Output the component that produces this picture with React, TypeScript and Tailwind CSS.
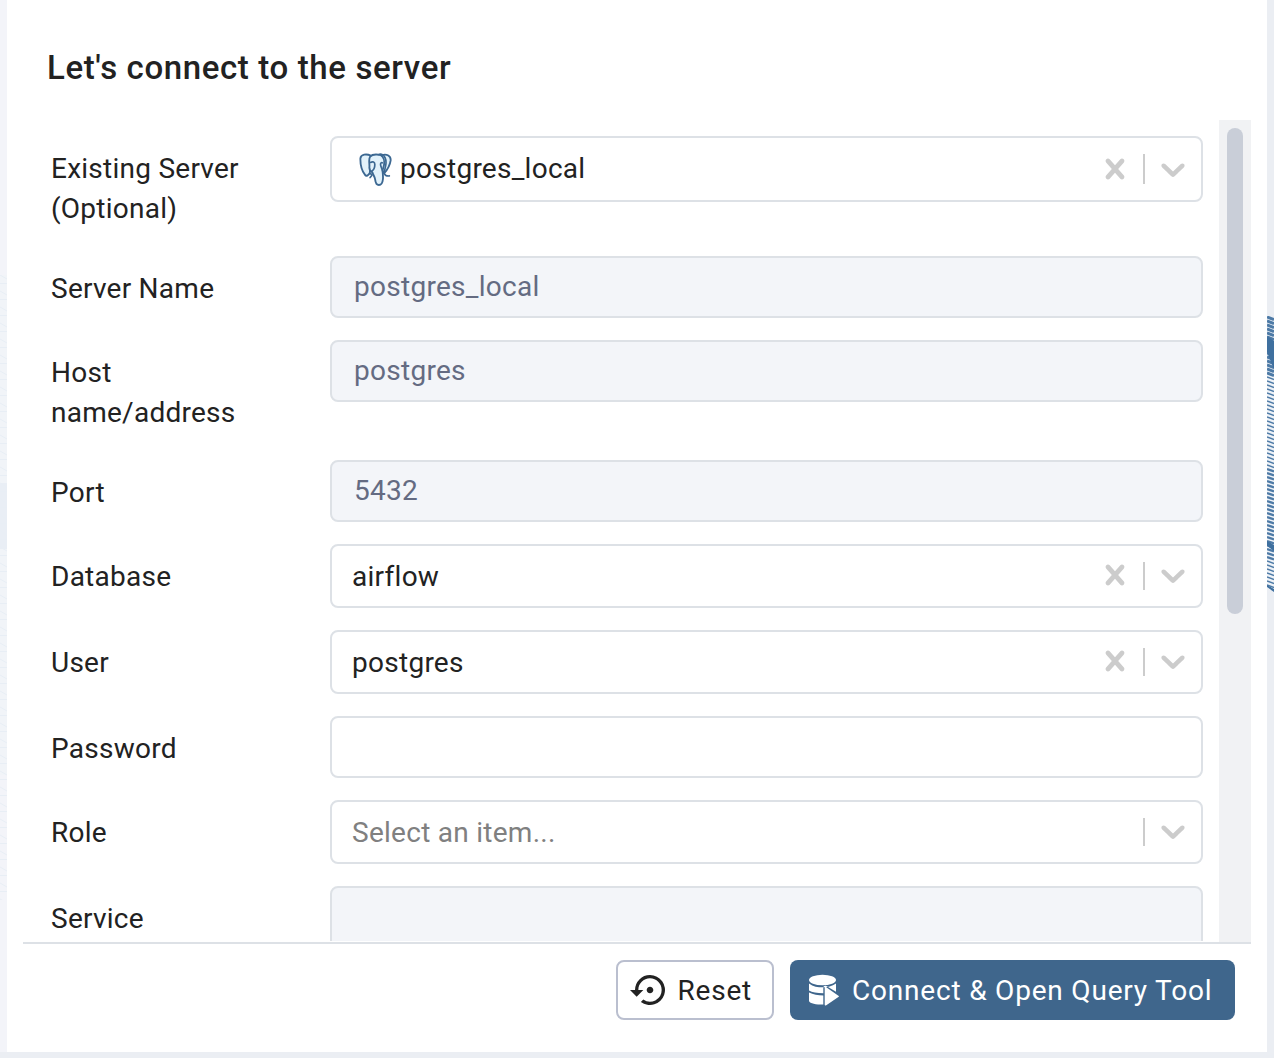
import type { ReactNode } from 'react';
import { MdSettingsBackupRestore } from 'react-icons/md';

function ElephantIcon() {
  return (
    <svg viewBox="29 26 98 98" className="h-[33px] w-[33px] shrink-0" fill="#e2f2fb" stroke="#3c6892" strokeWidth="5.5" strokeLinecap="round" strokeLinejoin="round">
      <path d="M64 34C52 28 34 29 33 43C33 58 38 80 47 91C51 97 56 92 61 86L64 60Z" />
      <path d="M97 32C112 28 124 34 123 48C121 62 113 76 104 86L96 80Z" />
      <path d="M62 37C68 30 78 30 86 31C97 32 104 42 104 54C104 66 99 73 99 80C100 88 101 96 100 104C99 116 96 121 88 121C79 121 78 114 77 105C76 96 71 92 69 84C61 80 59 74 60 66C60 52 57 44 62 37Z" />
      <path d="M63 54C70 50 76 53 76 60C76 70 73 76 67 80M86 31C90 29 95 29 99 31C107 37 110 47 109 58C108 69 104 77 104 87C107 93 112 95 119 94M98 55C92 53 92 61 95 68C97 76 98 79 103 86M62 88C66 87 68 90 67 93L62 99" fill="none" strokeWidth="5" />
    </svg>
  );
}

function CrossIcon() {
  return (
    <svg viewBox="0 0 20 20" className="h-10 w-10" fill="#cccccc">
      <path d="M14.348 14.849c-0.469 0.469-1.229 0.469-1.697 0l-2.651-3.030-2.651 3.029c-0.469 0.469-1.229 0.469-1.697 0-0.469-0.469-0.469-1.229 0-1.697l2.758-3.15-2.759-3.152c-0.469-0.469-0.469-1.228 0-1.697s1.228-0.469 1.697 0l2.652 3.031 2.651-3.031c0.469-0.469 1.228-0.469 1.697 0s0.469 1.229 0 1.697l-2.758 3.152 2.758 3.15c0.469 0.469 0.469 1.229 0 1.698z" />
    </svg>
  );
}

function ChevronIcon() {
  return (
    <svg viewBox="0 0 20 20" className="h-10 w-10" fill="#cccccc">
      <path d="M4.516 7.548c0.436-0.446 1.043-0.481 1.576 0l3.908 3.747 3.908-3.747c0.533-0.481 1.141-0.446 1.574 0 0.436 0.445 0.408 1.197 0 1.615-0.406 0.418-4.695 4.502-4.695 4.502-0.217 0.223-0.502 0.335-0.787 0.335s-0.57-0.112-0.789-0.335c0 0-4.287-4.084-4.695-4.502s-0.436-1.17 0-1.615z" />
    </svg>
  );
}

function QueryToolIcon() {
  return (
    <svg viewBox="0 0 30 32" className="h-8 w-[30px] shrink-0" fill="white">
      <ellipse cx="13.5" cy="6" rx="13.5" ry="5.3" />
      <path d="M0 9.4C4 12.6 9 13.3 13.5 13.3C18.5 13.3 23 12.4 27 9.4V17.8L17.4 11.9C15.8 11.2 14.3 12 14.3 13.6V19.2C8 19.2 3 18.1 0 16.4Z" />
      <path d="M0 18.6C4 20.6 9 21.4 14.3 21.4V30.6C7 30.6 1 29.6 0 27Z" />
      <path d="M15.7 13.6C15.7 12.8 16.3 12.6 16.9 12.9L29.4 21.7C30.1 22.2 30.1 22.7 29.4 23.1L16.9 31.4C16.3 31.7 15.7 31.4 15.7 30.8Z" />
    </svg>
  );
}

function Row({ label, children }: { label: ReactNode; children: ReactNode }) {
  return (
    <div className="flex shrink-0 items-start">
      <div className="w-[279px] shrink-0 pt-[13px] pb-[5px] text-[28px] leading-10 tracking-[0.25px]">{label}</div>
      <div className="min-w-0 flex-1">{children}</div>
    </div>
  );
}

function Disabled({ value }: { value?: string }) {
  return (
    <div className="flex h-[62px] items-center rounded-[8px] border-2 border-[#dde1e6] bg-[#f3f5f9] px-[22px] text-[28px] tracking-[0.28px] text-[#646b82]">
      {value}
    </div>
  );
}

function Select({ value, placeholder, icon }: { value?: string; placeholder?: string; icon?: boolean }) {
  return (
    <div className={`flex items-center rounded-[8px] border-2 border-[#dde1e6] bg-white text-[28px] tracking-[0.27px] ${icon ? 'h-[66px] pl-[27px]' : 'h-16 pl-5'}`}>
      {icon && <span className="mr-2 flex"><ElephantIcon /></span>}
      <span className={`flex-1 ${icon ? '' : 'pt-0.5'} ${value ? 'text-[#222222]' : 'text-[#808080]'}`}>{value ?? placeholder}</span>
      {value && <span className={`mr-2 flex ${icon ? '' : 'pb-0.5'}`}><CrossIcon /></span>}
      <span className={`w-0.5 bg-[#cccccc] ${icon ? 'h-[30px]' : 'h-7'}`} />
      <span className={`mr-2 ml-2 flex ${icon ? '' : 'pb-0.5'}`}><ChevronIcon /></span>
    </div>
  );
}

const strands = Array.from({ length: 68 }, (_, i) => i * 4);
const faintLines = Array.from({ length: 40 }, (_, i) => i * 16);

export default function App() {
  return (
    <div className="flex h-[1058px] w-[1274px] flex-col overflow-hidden bg-[#ebeef3] font-[Roboto,sans-serif] text-[#222222]">
      <div className="flex h-[1052px]">
        <div className="w-[7px] shrink-0 bg-[#f3f4f9] pt-[275px]">
          <svg viewBox="0 0 7 625" className="block h-[625px] w-[7px]">
            <rect y="0" width="7" height="500" fill="#f1f4f8" />
            <rect y="208" width="7" height="66" fill="#e9eef5" />
            {faintLines.map((y) => (
              <path key={y} d={`M0 ${y}L7 ${y + 4}M0 ${y + 8.5}H7`} stroke="#e8eef5" strokeWidth="1" />
            ))}
          </svg>
        </div>

        <main className="flex w-[1260px] shrink-0 flex-col bg-white px-4">
          <h1 className="h-[120px] pt-12 pl-6 text-[33px] leading-10 font-medium tracking-[0.62px]">Let's connect to the server</h1>
          <div className="flex h-[824px] shrink-0 border-b-2 border-[#dde1e6]">
            <div className="flex h-[821px] flex-1 flex-col gap-[22px] overflow-hidden pt-4 pr-4 pl-7">
              <Row label={<>Existing Server<br />(Optional)</>}><Select value="postgres_local" icon /></Row>
              <Row label="Server Name"><Disabled value="postgres_local" /></Row>
              <Row label={<>Host<br />name/address</>}><Disabled value="postgres" /></Row>
              <Row label="Port"><Disabled value="5432" /></Row>
              <Row label="Database"><Select value="airflow" /></Row>
              <Row label="User"><Select value="postgres" /></Row>
              <Row label="Password"><div className="h-[62px] rounded-[8px] border-2 border-[#dde1e6]" /></Row>
              <Row label="Role"><Select placeholder="Select an item..." /></Row>
              <Row label="Service"><Disabled /></Row>
            </div>
            <div className="w-8 bg-[#f1f2f4] px-2 pt-2">
              <div className="h-[486px] rounded-full bg-[#c9ced8]" />
            </div>
          </div>
          <div className="flex justify-end gap-4 pt-4 pr-4">
            <button className="flex h-[60px] w-[158px] items-center rounded-[8px] border-2 border-[#babfcf] pl-3 text-[28px] tracking-[0.8px]">
              <MdSettingsBackupRestore className="mr-[7.5px] h-10 w-10" /><span className="pt-0.5">Reset</span>
            </button>
            <button className="flex h-[60px] w-[445px] items-center rounded-[8px] bg-[#3f668c] pl-[19px] text-[28px] tracking-[0.8px] whitespace-nowrap text-white">
              <span className="mr-[13px] flex"><QueryToolIcon /></span><span className="pt-0.5">Connect &amp; Open Query Tool</span>
            </button>
          </div>
        </main>

        <div className="w-[7px] shrink-0 pt-[316px]">
          <svg viewBox="0 0 7 276" className="block h-[276px] w-[7px]">
            <path d="M0 0L7 4V276L0 271Z" fill="#eef2f7" />
            {strands.map((y) => (
              <path key={y} d={`M0 ${y + 1}L7 ${y + 3.5}`} stroke="#4d7aa6" strokeWidth={y < 60 ? 3 : y < 150 || y > 240 ? 1.5 : 2.3} />
            ))}
            <path d="M0 20L7 25V54L0 36ZM0 225L7 229V235L0 230ZM0 269L7 273V276L0 271Z" fill="#3f709f" />
          </svg>
        </div>
      </div>
    </div>
  );
}
